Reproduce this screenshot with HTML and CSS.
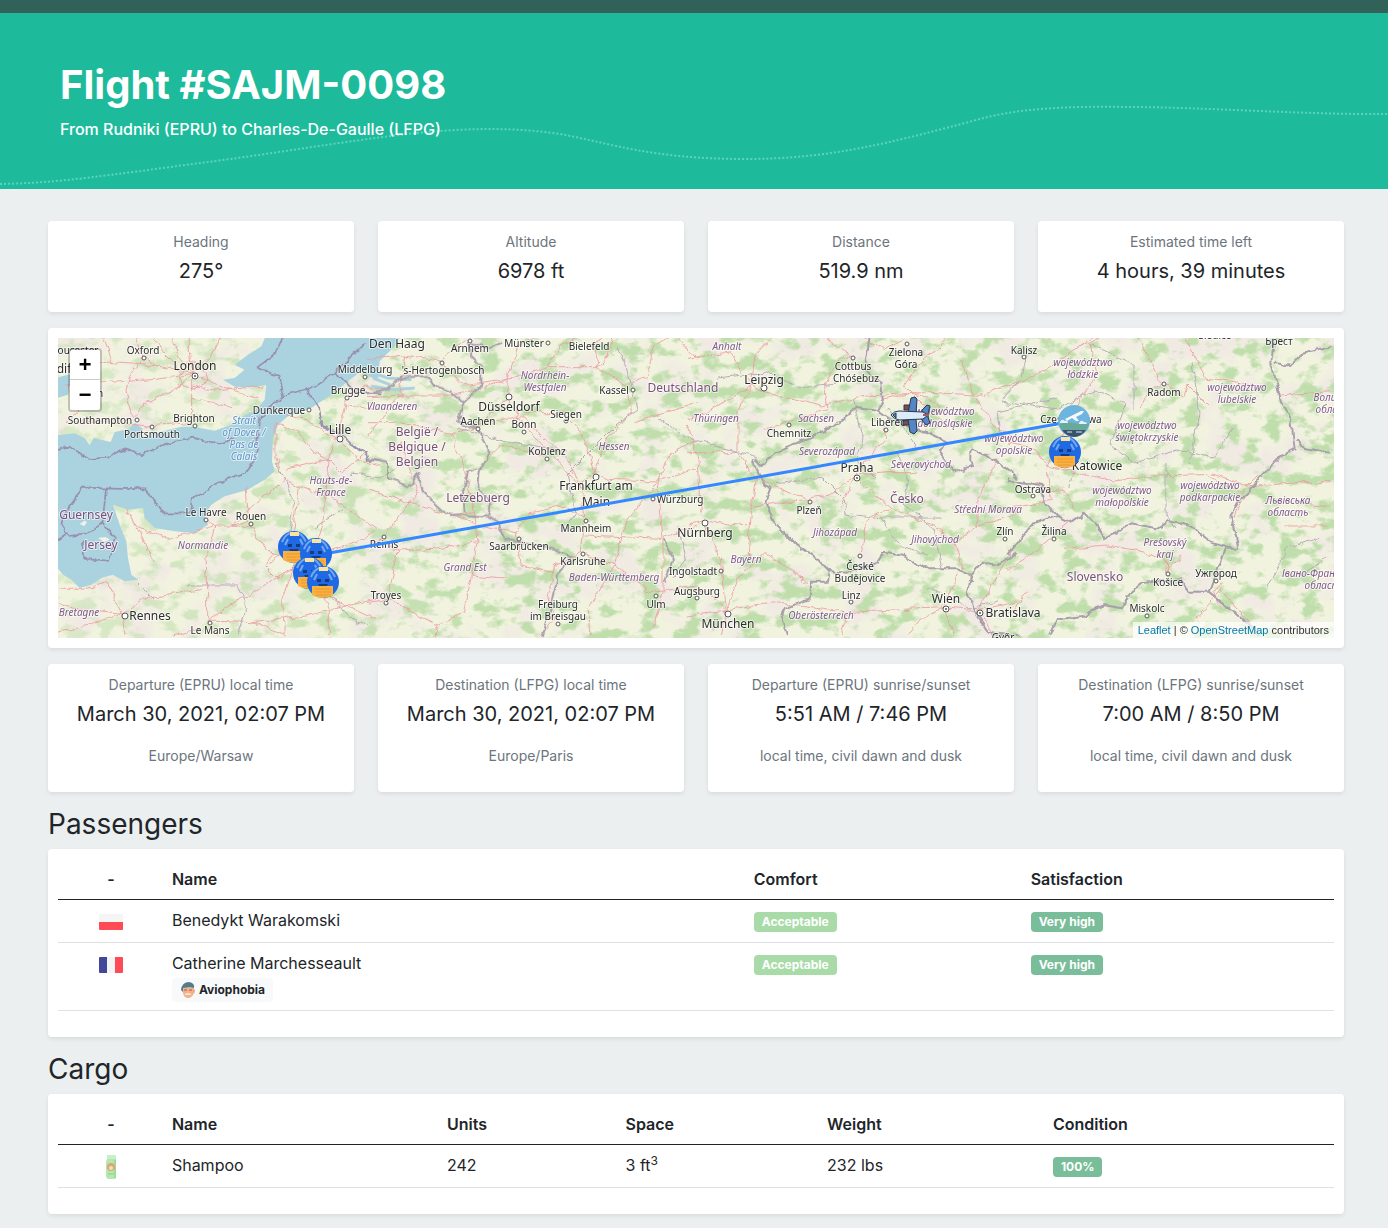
FILE: index.html
```html
<!DOCTYPE html>
<html lang="en">
<head>
<meta charset="utf-8">
<meta name="viewport" content="width=device-width, initial-scale=1">
<title>Flight #SAJM-0098</title>
<link rel="stylesheet" href="styles.css">
</head>
<body>
<div class="topbar"></div>
<header class="hero">
  <svg class="hero-wave" viewBox="0 0 1388 176" preserveAspectRatio="none" aria-hidden="true">
    <path d="M0 171C60 170 110 162 200 150C280 140 380 122 440 118C480 115 520 115 560 121C610 130 650 146 745 146C830 146 890 130 980 106C1020 95 1070 93 1130 94C1200 94 1310 102 1388 101"/>
  </svg>
  <h1 class="hero-title">Flight #SAJM-0098</h1>
  <p class="hero-subtitle">From Rudniki (EPRU) to Charles-De-Gaulle (LFPG)</p>
</header>

<main class="content">
  <section class="stats">
    <div class="card stat"><p class="stat-label">Heading</p><p class="stat-value">275°</p></div>
    <div class="card stat"><p class="stat-label">Altitude</p><p class="stat-value">6978 ft</p></div>
    <div class="card stat"><p class="stat-label">Distance</p><p class="stat-value">519.9 nm</p></div>
    <div class="card stat"><p class="stat-label">Estimated time left</p><p class="stat-value">4 hours, 39 minutes</p></div>
  </section>

  <section class="card map-card">
    <div class="map">
      <svg class="map-canvas" viewBox="58 338 1276 300" preserveAspectRatio="xMidYMid slice" role="img" aria-label="Route map">
        <defs>
          <filter id="forest" x="0" y="0" width="100%" height="100%" color-interpolation-filters="sRGB">
            <feTurbulence type="fractalNoise" baseFrequency="0.05 0.07" numOctaves="6" seed="11"/>
            <feColorMatrix values="0 0 0 0 .75  0 0 0 0 .87  0 0 0 0 .67  6 0 0 0 -3"/>
          </filter>
          <filter id="grass" x="0" y="0" width="100%" height="100%" color-interpolation-filters="sRGB">
            <feTurbulence type="fractalNoise" baseFrequency="0.025" numOctaves="5" seed="4"/>
            <feColorMatrix values="0 0 0 0 .942  0 0 0 0 .918  0 0 0 0 .89  0 5 0 0 -2.4"/>
          </filter>
          <filter id="rough" x="58" y="338" width="1276" height="300" filterUnits="userSpaceOnUse">
            <feTurbulence type="fractalNoise" baseFrequency="0.09" numOctaves="3" seed="7"/>
            <feDisplacementMap in="SourceGraphic" scale="10" xChannelSelector="R" yChannelSelector="G" color-interpolation-filters="sRGB"/>
          </filter>
          <linearGradient id="east"><stop offset="0" stop-color="#fff" stop-opacity=".45"/><stop offset=".35" stop-color="#fff"/></linearGradient>
          <mask id="forest-fade"><rect x="58" y="338" width="1276" height="300" fill="url(#east)"/></mask>
          <g id="hangar">
            <circle r="16" fill="#1f6ae4"/>
            <path d="M-12-5q4-9 10-9M12-5q-4-9-10-9M-9-2l3-6M9-2l-3-6" fill="none" stroke="#74a9f0" stroke-width="2"/>
            <rect x="-4" y="-15" width="9" height="4" fill="#fbe3a0"/>
            <path d="M-6-3h4v3h-4zM2-3h4v3h-4zM-5 2h10l-2 3h-6z" fill="#143c7c"/>
            <path d="M-11 4h21v9q-10 6-21 0z" fill="#fbb03f"/>
            <path d="M-8 7h16M-8 10h16M-7 13h13" stroke="#e39a32"/>
          </g>
        </defs>

        <rect x="58" y="338" width="1276" height="300" fill="#f1f3df"/>
        <rect x="58" y="338" width="1276" height="300" filter="url(#grass)"/>
        <g mask="url(#forest-fade)"><rect x="58" y="338" width="1276" height="300" filter="url(#forest)"/></g>

        <g class="sea" transform="translate(48 328) scale(.3333)">
          <path d="M20 322L80 316L110 330L125 352L137 330L188 342L200 312L240 304L262 285L285 303L275 330L310 318L400 296L440 297L500 308L550 290L590 262L625 245L650 215L655 172L600 178L560 176L525 155L560 150L590 125L560 110L600 80L640 55L655 20H1060L1040 55L995 100L990 160L940 130L900 160L850 200L790 240L720 265L690 290L675 330L672 400L680 430L650 455L600 485L530 505L490 530L470 560L480 590L440 615L380 610L320 600L290 570L285 540L240 545L195 530L215 590L235 640L240 690L250 740L270 755L230 760L195 740L160 750L130 770L95 780L70 755L45 740L20 710Z"/>
          <path d="M20 150L70 138L60 200L20 212Z"/>
          <path class="isle" d="M95 588l14-10 8 4-8 12zM150 630l22-3 14 8-18 6z"/>
          <path class="inlet" d="M960 130l60 20 70 5M970 175l70 10 60-5M975 150l50 20"/>
        </g>

        <g class="roads" filter="url(#rough)">
          <g transform="translate(48 328) scale(.3333)">
            <path d="M440 145L400 100 380 30M440 145L430 80 430 30M440 145L490 100 530 30M440 145L340 120 200 110 100 95M440 145L380 200 300 230 265 275M440 145L440 220 440 290M440 145L520 180 640 215M440 145L330 160 180 170 60 180M290 90L250 150 240 200 262 275M290 90L340 120M290 90L270 30M160 200L60 290M440 220L560 245M440 180L510 195 650 180M400 145L410 180 450 188 485 160 475 120 430 105 400 145M60 290L150 285 310 300 430 290M200 110L170 30M320 30L350 80 400 130"/>
            <path d="M690 290L760 320 800 380 850 400 870 335L940 400 1000 420M690 290L690 400 715 460 760 485 750 560 740 640M850 400L840 500 830 600 810 660 790 700M870 335L900 240 900 210 960 180 1000 190M870 335L790 290 720 265M900 240L1000 250M760 485L840 500 990 610M715 460L600 560 560 600 510 600 475 580M510 600L480 700 485 780 485 885 520 930M560 600L620 610 680 690 745 680M510 600L370 640 270 600 240 545M320 710L290 630 240 560M230 865L185 770 110 790 30 790M230 865L90 850 30 830M230 865L290 820 470 790M230 865L240 930M230 865L120 900 30 920M485 885L580 820 660 780 745 720M485 885L620 890 780 870 990 820M600 480L608 590 560 600M745 720L820 800 990 880M745 720L710 820 715 930M745 720L700 760 660 720 680 690M790 700L900 660 990 620M790 700L850 850 850 930M620 890L720 930M460 910L380 930M850 400L890 440 960 380M850 400L720 430M740 640L670 720"/>
          </g>
          <g transform="translate(370 328) scale(.3333)">
            <path d="M0 100L110 90 215 105 300 40M110 90L95 210 0 330M215 105L290 180 420 160 450 60 520 30M95 210L250 210 330 190 420 160M0 215L95 210M0 290L100 290 250 325 330 300 420 220M250 325L290 440 320 560 240 570M330 300L460 270 590 390 640 480M420 160L420 220 470 300 640 480M420 160L540 125 690 125 780 180 840 150 860 60 910 30M540 125L580 60 640 30M690 125L680 60 700 30M780 180L790 260 720 340 680 440M470 260L590 260 650 340 680 440M680 440L720 460 870 465 990 430M680 440L640 480 650 580 590 540 490 560 445 620 330 600M650 580L640 680 560 720 540 800 560 880 520 930M640 680L740 720 850 800 990 780M650 630L880 640 990 600M870 465L885 640 885 800 860 900M740 720L770 600 830 520 870 465M870 465L910 380 990 340M0 660L40 640 150 500 95 350M40 640L90 675 60 820 0 830M90 675L200 670 330 650M320 560L330 650 310 750 290 860 210 900 200 930M60 820L210 900M445 620L460 720 560 740M310 750L420 760M0 490L120 530 320 590M530 390L400 360 340 420M800 290L990 230M930 30L990 100M670 930L660 850 740 720M740 30L720 90 690 125"/>
          </g>
          <g transform="translate(690 328) scale(.3333)">
            <path d="M0 100L130 80 190 180 230 200 400 240 540 210 700 200 860 210 990 170M190 180L200 90 260 30M190 180L150 260 150 380 0 380M150 380L205 460 190 560 180 700M190 180L60 260 0 280M205 460L360 520 420 510 500 450M500 450L600 440 690 440M500 450L540 400 590 340 590 300M500 450L460 540M500 450L610 550 740 600 800 650M610 550L540 570 520 680M230 310L295 290 420 250 410 180 460 100 490 90M650 180L780 300M650 180L700 110 790 30M820 100L860 210 920 300 990 340M0 600L45 585 180 600M45 585L100 700 115 855M115 855L60 800 0 790M115 855L150 760 230 680 360 770M115 855L260 830 480 860 660 850 770 845M480 860L460 930M770 845L700 880 660 930M770 845L810 740M770 845L870 855 990 830M800 650L830 730 850 760M800 650L870 600 990 560M770 845L800 930M115 855L100 930M0 300L30 400 40 560M520 30L590 70 650 40M490 90L440 60 400 30M990 650L870 855M0 870L115 855M360 520L200 540M930 400L870 520 870 600M870 855L920 930M580 220L680 200 760 240"/>
          </g>
          <g transform="translate(1010 328) scale(.3333)">
            <path d="M0 190L120 130 220 60 300 30M220 60L260 30M250 60L270 140 200 250 150 370 120 420M120 420L250 450 320 465 450 450 620 445 720 480 830 470 970 470M120 420L130 520 60 540 0 550M390 30L430 110 460 170M460 170L530 210 540 180 600 240M400 240L420 200M420 200L460 170M530 30L560 90 600 160 760 180M80 470L120 490 180 500 200 550M130 635L50 700 0 730M130 635L190 580M170 670L300 660 430 685 480 710 475 740M60 800L20 850 0 870M475 740L520 690M560 880L640 790 690 850 730 900M640 770L620 800 640 850M820 210L970 200M830 600L960 600M870 530L970 540M600 450L700 500 760 440M0 350L80 370 120 420M730 480L680 570M130 40L60 20M470 700L490 740"/>
          </g>
        </g>

        <g class="regions" filter="url(#rough)">
          <path d="M278 466l12 20 6 24-5 28 11 16-8 18 18 20 26 8 12 20 20 8M190 588l50 0 10 20-10 28M140 586l16 16M620 348l12 30 8 34-20 14-50 50 8 40-14 20M460 430l60 16 50 8M660 420l30 20 70 20M720 380l50-6 30 16 40-4M855 400l10 40-6 24 20 16M776 486l50-6 20 20 2 16 36 4 60 0M884 520l20 30 26 8M890 410l30 40M900 455l10 30-4 20 30 26 8 40M1060 400l-60 14 4 30M1030 350l-6 30-20 24 56 8 36-20 32 14-16 40 24 20 44-14 36 8 20-30M1092 346l44 20 0 46M1194 366l8 50-10 50M1072 490l6-40M1168 466l0 50 10 16M1300 580l30-20M1320 540l-30 10-20 40M680 530l8 30-12 20M316 530l30-18M400 470l-18 10-30-4M930 590l40 20 30-6"/>
        </g>
        <g class="borders" filter="url(#rough)">
          <g transform="translate(48 328) scale(.3333)">
            <path d="M30 370L70 362 130 402 185 398 235 370 290 388 370 350 440 338 520 356 570 340M715 30L690 85 635 125 700 150 715 210M715 210L640 270 630 400 600 440 540 460 480 490 440 525 435 562 350 562 325 520 300 490 200 488 110 485 90 520 60 560 45 600 65 630 120 625 170 590 180 488M715 210L785 192 870 140 960 50M785 192L820 250 830 300 890 330 905 350 960 380 965 400 1000 405M870 140L930 200 1000 205M170 590L210 640 190 705 115 695 110 650M30 640L65 620"/>
          </g>
          <g class="borders-land" transform="translate(370 328) scale(.3333)">
            <path d="M0 205L60 190 100 155 180 150 200 180 250 200 290 230 270 290 330 305 345 340 365 380 335 440 330 480 370 530 360 575 390 590 410 640 540 665 610 690 570 750 550 840 525 930M290 230L340 180 340 120 310 90 300 50 370 70M0 400L60 410 60 460 130 480 150 440 165 500 240 570 290 570 360 575M330 430L300 440 285 500 290 560M370 70L400 50M890 640L915 700 890 770"/>
          </g>
          <g class="borders-land" transform="translate(690 328) scale(.3333)">
            <path d="M545 30L530 130 580 170 585 230 570 255M570 255L500 245 490 265 440 300 360 340 260 380 220 420 200 400M570 255L620 290 680 310 740 330 780 350 750 375 800 440 850 420 850 370 920 400 970 440 990 460M190 400L230 480 250 490 235 530 260 590 330 660 380 690 425 740 420 770 370 770 365 820 290 850 280 870 300 930M425 735L480 740 570 710 590 680 650 690 720 730 810 730 850 745M850 745L880 710 930 720 990 680M850 745L840 800 860 860 900 920 990 930"/>
          </g>
          <g class="borders-land" transform="translate(1010 328) scale(.3333)">
            <path d="M0 460L30 470 100 480 110 530 150 570 190 590 230 560 270 600 290 640 370 595 440 610 480 585 550 600 610 650 660 665 695 665M0 690L80 590 150 570M695 665L670 570 700 520 820 390 860 370 850 280 820 230 790 110 800 30M800 110L850 120 890 80 970 60M655 665L620 760 605 800M605 800L540 800 520 760 410 770 360 810 340 850 290 840 220 870 150 880 130 930M605 800L680 860 760 930M870 340L890 370 970 380"/>
          </g>
        </g>

        <g class="dots">
          <circle cx="144" cy="358" r="2"/><circle cx="195" cy="376" r="3"/><circle cx="137" cy="420" r="2"/><circle cx="152" cy="427" r="2"/><circle cx="195" cy="426" r="2"/><circle cx="309" cy="410" r="2"/><circle cx="340" cy="439" r="3"/><circle cx="347" cy="398" r="2"/><circle cx="365" cy="377" r="2"/><circle cx="206" cy="520" r="2"/><circle cx="251" cy="524" r="2"/><circle cx="125" cy="616" r="3"/><circle cx="210" cy="623" r="2"/><circle cx="384" cy="537" r="2"/><circle cx="386" cy="603" r="2"/><circle cx="442" cy="363" r="2"/><circle cx="470" cy="341" r="2"/><circle cx="548" cy="343" r="2"/><circle cx="509" cy="397" r="3"/><circle cx="478" cy="429" r="2"/><circle cx="524" cy="432" r="2"/><circle cx="566" cy="421" r="2"/><circle cx="547" cy="459" r="2"/><circle cx="596" cy="477" r="3"/><circle cx="633" cy="390" r="2"/><circle cx="653" cy="499" r="2"/><circle cx="586" cy="521" r="2"/><circle cx="519" cy="539" r="2"/><circle cx="583" cy="554" r="2"/><circle cx="558" cy="624" r="2"/><circle cx="656" cy="596" r="2"/><circle cx="697" cy="598" r="2"/><circle cx="721" cy="571" r="2"/><circle cx="705" cy="523" r="3"/><circle cx="728" cy="614" r="3"/><circle cx="764" cy="388" r="3"/><circle cx="789" cy="425" r="2"/><circle cx="853" cy="358" r="2"/><circle cx="907" cy="344" r="2"/><circle cx="886" cy="430" r="2"/><circle cx="857" cy="478" r="3"/><circle cx="810" cy="502" r="2"/><circle cx="860" cy="556" r="2"/><circle cx="851" cy="602" r="2"/><circle cx="946" cy="609" r="3"/><circle cx="980" cy="613" r="3"/><circle cx="1005" cy="539" r="2"/><circle cx="1024" cy="357" r="2"/><circle cx="1164" cy="384" r="2"/><circle cx="1033" cy="496" r="2"/><circle cx="1054" cy="539" r="2"/><circle cx="1168" cy="574" r="2"/><circle cx="1216" cy="581" r="2"/><circle cx="1147" cy="616" r="2"/>
          <g class="dot-core"><circle cx="195" cy="376" r="1"/><circle cx="857" cy="478" r="1"/><circle cx="946" cy="609" r="1"/><circle cx="980" cy="613" r="1"/></g>
        </g>

        <g class="place">
          <text x="78" y="354">oucester</text><text x="143" y="354">Oxford</text><text x="100" y="397">n</text><text x="100" y="424">Southampton</text><text x="152" y="438">Portsmouth</text><text x="194" y="422">Brighton</text><text x="279" y="414">Dunkerque</text><text x="348" y="394">Brugge</text><text x="365" y="373">Middelburg</text><text x="443" y="374">'s-Hertogenbosch</text><text x="470" y="352">Arnhem</text><text x="524" y="347">Münster</text><text x="589" y="350">Bielefeld</text><text x="614" y="394">Kassel</text><text x="478" y="425">Aachen</text><text x="524" y="428">Bonn</text><text x="566" y="418">Siegen</text><text x="547" y="455">Koblenz</text><text x="680" y="503">Würzburg</text><text x="586" y="532">Mannheim</text><text x="519" y="550">Saarbrücken</text><text x="583" y="565">Karlsruhe</text><text x="206" y="516">Le Havre</text><text x="251" y="520">Rouen</text><text x="384" y="548">Reims</text><text x="386" y="599">Troyes</text><text x="210" y="634">Le Mans</text><text x="558" y="608">Freiburg</text><text x="558" y="620">im Breisgau</text><text x="656" y="608">Ulm</text><text x="697" y="595">Augsburg</text><text x="693" y="575">Ingolstadt</text><text x="789" y="437">Chemnitz</text><text x="853" y="370">Cottbus</text><text x="856" y="382">Chóśebuz</text><text x="906" y="356">Zielona</text><text x="906" y="368">Góra</text><text x="888" y="426">Liberec</text><text x="809" y="514">Plzeň</text><text x="860" y="570">České</text><text x="860" y="582">Budějovice</text><text x="851" y="599">Linz</text><text x="1024" y="354">Kalisz</text><text x="1164" y="396">Radom</text><text x="1071" y="423">Częstochowa</text><text x="1033" y="493">Ostrava</text><text x="1054" y="535">Žilina</text><text x="1005" y="535">Zlín</text><text x="1168" y="586">Košice</text><text x="1216" y="577">Ужгород</text><text x="1147" y="612">Miskolc</text><text x="1003" y="641">Győr</text><text x="1215" y="339">Siedlce</text><text x="1279" y="345">Брест</text>
        </g>
        <g class="place place-large">
          <text x="195" y="370">London</text><text x="64" y="373">dif</text><text x="397" y="348">Den Haag</text><text x="340" y="434">Lille</text><text x="509" y="411">Düsseldorf</text><text x="596" y="490">Frankfurt am</text><text x="596" y="506">Main</text><text x="150" y="620">Rennes</text><text x="705" y="537">Nürnberg</text><text x="728" y="628">München</text><text x="764" y="384">Leipzig</text><text x="857" y="472">Praha</text><text x="946" y="603">Wien</text><text x="1013" y="617">Bratislava</text><text x="1097" y="470">Katowice</text>
        </g>
        <g class="place country">
          <text x="86" y="519">Guernsey</text><text x="101" y="549">Jersey</text><text x="417" y="436">België /</text><text x="417" y="451">Belgique /</text><text x="417" y="466">Belgien</text><text x="478" y="502">Letzebuerg</text><text x="683" y="392">Deutschland</text><text x="907" y="503">Česko</text><text x="1095" y="581">Slovensko</text>
        </g>
        <g class="place region">
          <text x="392" y="410">Vlaanderen</text><text x="545" y="379">Nordrhein-</text><text x="545" y="391">Westfalen</text><text x="614" y="450">Hessen</text><text x="331" y="484">Hauts-de-</text><text x="331" y="496">France</text><text x="203" y="549">Normandie</text><text x="79" y="616">Bretagne</text><text x="465" y="571">Grand Est</text><text x="614" y="581">Baden-Württemberg</text><text x="746" y="563">Bayern</text><text x="727" y="350">Anhalt</text><text x="716" y="422">Thüringen</text><text x="816" y="422">Sachsen</text><text x="827" y="455">Severozápad</text><text x="921" y="468">Severovýchod</text><text x="835" y="536">Jihozápad</text><text x="935" y="543">Jihovýchod</text><text x="988" y="513">Střední Morava</text><text x="821" y="619">Oberösterreich</text><text x="945" y="415">województwo</text><text x="945" y="427">dolnośląskie</text><text x="1014" y="442">województwo</text><text x="1014" y="454">opolskie</text><text x="1083" y="366">województwo</text><text x="1083" y="378">łódzkie</text><text x="1237" y="391">województwo</text><text x="1237" y="403">lubelskie</text><text x="1147" y="429">województwo</text><text x="1147" y="441">świętokrzyskie</text><text x="1122" y="494">województwo</text><text x="1122" y="506">małopolskie</text><text x="1210" y="489">województwo</text><text x="1210" y="501">podkarpackie</text><text x="1165" y="546">Prešovský</text><text x="1165" y="558">kraj</text><text x="1288" y="504">Львівська</text><text x="1288" y="516">область</text><text x="1338" y="401">Волинська</text><text x="1336" y="413">область</text><text x="1325" y="577">Івано-Франківська</text><text x="1325" y="589">область</text>
        </g>
        <g class="place region water">
          <text x="244" y="424">Strait</text><text x="244" y="436">of Dover /</text><text x="244" y="448">Pas de</text><text x="244" y="460">Calais</text>
        </g>

        <path d="M318 555L1074 421" fill="none" stroke="#3388ff" stroke-width="3"/>
        <use href="#hangar" x="294" y="547"/>
        <use href="#hangar" x="316" y="554"/>
        <use href="#hangar" x="309" y="573"/>
        <use href="#hangar" x="323" y="582"/>
        <use href="#hangar" x="1065" y="452"/>
        <g transform="translate(1074 421)">
          <circle r="16" fill="#6db5df"/>
          <path d="M-15 3q8-3 15-1t15 0q-1 5-4 8h-22q-3-3-4-7z" fill="#69a99c"/>
          <path d="M-12 9h24q-5 7-12 7t-12-7z" fill="#3a536d"/>
          <path d="M-7 11h5M2 11h6" stroke="#dce9ef" stroke-width="1"/>
          <path d="M-9-2L7-10l3 0-2 3-6 3 3 4-3 0-4-3-5 3z" fill="#f5fafc"/>
          <path d="M-14 1q2-4 5-1 3-1 3 2h-8zM5 2q2-4 5-1 3 0 3 2h-8z" fill="#e1f3f7"/>
        </g>
        <g transform="translate(911 415)" stroke="#26384f" stroke-width="1" stroke-linejoin="round">
          <path d="M-7-10l6 0 0 5-6 0zM-8 6l7-1 0 5-7 0z" fill="#804b49"/>
          <path d="M0-17l4-1 2 2-1 14h-8zM-3 4l8 0 1 12-3 3-4-2z" fill="#5585c4"/>
          <path d="M11-5l5-5 3 1-2 8 0 3 2 6-4 2-5-6z" fill="#5585c4"/>
          <path d="M-20 0q3-4 8-4l24 1 5 3-5 4-24 1q-5-1-8-5z" fill="#dceafa"/>
          <path d="M-18 0l3-2v5z" fill="#5d87b8"/>
          <path d="M12 0h6" stroke="#a75d51" stroke-width="2"/>
        </g>
      </svg>
      <div class="zoom-control">
        <button type="button" class="zoom-button" aria-label="Zoom in">+</button>
        <button type="button" class="zoom-button" aria-label="Zoom out">−</button>
      </div>
      <div class="attribution"><a href="#leaflet">Leaflet</a> | © <a href="#osm">OpenStreetMap</a> contributors</div>
    </div>
  </section>

  <section class="stats">
    <div class="card stat"><p class="stat-label">Departure (EPRU) local time</p><p class="stat-value">March 30, 2021, 02:07 PM</p><p class="stat-label stat-note">Europe/Warsaw</p></div>
    <div class="card stat"><p class="stat-label">Destination (LFPG) local time</p><p class="stat-value">March 30, 2021, 02:07 PM</p><p class="stat-label stat-note">Europe/Paris</p></div>
    <div class="card stat"><p class="stat-label">Departure (EPRU) sunrise/sunset</p><p class="stat-value">5:51 AM / 7:46 PM</p><p class="stat-label stat-note">local time, civil dawn and dusk</p></div>
    <div class="card stat"><p class="stat-label">Destination (LFPG) sunrise/sunset</p><p class="stat-value">7:00 AM / 8:50 PM</p><p class="stat-label stat-note">local time, civil dawn and dusk</p></div>
  </section>

  <section>
    <h2 class="section-title">Passengers</h2>
    <div class="card table-card">
      <table class="table passengers">
        <colgroup><col class="col-icon"><col class="col-name"><col class="col-comfort"><col></colgroup>
        <thead><tr><th class="icon-cell">-</th><th>Name</th><th>Comfort</th><th>Satisfaction</th></tr></thead>
        <tbody>
          <tr>
            <td class="icon-cell"><svg class="icon" viewBox="0 0 24 24" role="img" aria-label="Poland"><rect y="4" width="24" height="16" rx="1" fill="#f5f5f5"/><path d="M0 12h24v7a1 1 0 0 1-1 1H1a1 1 0 0 1-1-1z" fill="#ff4b55"/></svg></td>
            <td>Benedykt Warakomski</td>
            <td><span class="badge badge-ok">Acceptable</span></td>
            <td><span class="badge badge-good">Very high</span></td>
          </tr>
          <tr>
            <td class="icon-cell"><svg class="icon" viewBox="0 0 24 24" role="img" aria-label="France"><rect y="4" width="24" height="16" rx="1" fill="#f5f5f5"/><path d="M8 4v16H1a1 1 0 0 1-1-1V5a1 1 0 0 1 1-1z" fill="#41479b"/><path d="M16 4v16h7a1 1 0 0 0 1-1V5a1 1 0 0 0-1-1z" fill="#ff4b55"/></svg></td>
            <td>Catherine Marchesseault
              <div class="traits"><span class="badge badge-light"><svg class="trait-icon" viewBox="0 0 16 16" aria-hidden="true"><path d="M2 5h12v6q-2 5-6 5t-5-5z" fill="#f3b28c"/><path d="M1 8q1-8 8-8 6 1 5 6l-4-1-7 1v4z" fill="#547b8c"/><path d="M4 8h3M9 8h3" stroke="#a65e4a"/><path d="M5 12q3-2 6 0v1H5z" fill="#f9e4d5"/><path d="M13 7l2 1-1 4z" fill="#e69b73"/></svg>Aviophobia</span></div>
            </td>
            <td><span class="badge badge-ok">Acceptable</span></td>
            <td><span class="badge badge-good">Very high</span></td>
          </tr>
        </tbody>
      </table>
    </div>
  </section>

  <section>
    <h2 class="section-title">Cargo</h2>
    <div class="card table-card">
      <table class="table cargo">
        <colgroup><col class="col-icon"><col class="col-item"><col class="col-units"><col class="col-space"><col class="col-weight"><col></colgroup>
        <thead><tr><th class="icon-cell">-</th><th>Name</th><th>Units</th><th>Space</th><th>Weight</th><th>Condition</th></tr></thead>
        <tbody>
          <tr>
            <td class="icon-cell"><svg class="icon" viewBox="0 0 24 24" aria-hidden="true"><path d="M8 0h9v23l-1 1H9l-2-2V7l1-3z" fill="#b5e8ae"/><path d="M8 0h9v4H8z" fill="#c5f0c8"/><path d="M15 5h2v18h-2z" fill="#9cdc98"/><circle cx="12" cy="12" r="4" fill="#d9a877"/><circle cx="12" cy="13" r="2" fill="#f7ddc2"/><path d="M9 19h6" stroke="#8bcf86"/></svg></td>
            <td>Shampoo</td>
            <td>242</td>
            <td>3 ft<sup>3</sup></td>
            <td>232 lbs</td>
            <td><span class="badge badge-good">100%</span></td>
          </tr>
        </tbody>
      </table>
    </div>
  </section>
</main>
</body>
</html>
```
FILE: styles.css
```css
*, *::before, *::after { box-sizing: border-box; }

body {
  margin: 0;
  background: #ebefef;
  color: #212529;
  font: 400 16px/24px Inter, sans-serif;
}

h1, h2, p { margin: 0; }

.topbar { height: 13px; background: linear-gradient(#325f5b, #306156 60%, #36615c); }

.hero { position: relative; padding: 48px 60px; background: #1dbb9c; color: #fff; }
.hero-wave { position: absolute; inset: 0; width: 100%; height: 100%; }
.hero-wave path { fill: none; stroke: #6ddbc4; stroke-width: 2; stroke-dasharray: 2 2; opacity: .8; }
.hero-title { position: relative; font-size: 40px; line-height: 48px; font-weight: 700; }
.hero-subtitle { position: relative; padding-top: 8px; font-weight: 500; }

.content { padding: 32px 44px 14px 48px; }

.card { background: #fff; border-radius: 4px; box-shadow: 0 2px 4px rgba(0, 0, 0, .08); }

.stats { display: grid; grid-template-columns: repeat(4, 1fr); gap: 24px; }
.stat { padding: 10px 10px 29px; text-align: center; }
.stat-label { color: #6c757d; font-size: 14px; line-height: 22px; font-weight: 400; }
.stat-value { padding-top: 6px; font-size: 20px; line-height: 24px; font-weight: 400; }
.stat-note { padding: 19px 0 0; margin-bottom: -4px; }

.map-card { margin: 16px 0; padding: 10px; }
.map { position: relative; height: 300px; overflow: hidden; }
.map-canvas { display: block; width: 100%; height: 100%; }
.sea path { fill: #aad3df; }
.sea .isle { fill: #f3f3e5; }
.sea .inlet { fill: none; stroke: #aad3df; stroke-width: 9; }
.roads path { fill: none; stroke: #ee9aa2; stroke-width: 3; stroke-linejoin: round; opacity: .85; }
.regions path { fill: none; stroke: #b7adb7; stroke-width: 1; }
.borders path { fill: none; stroke: #998fae; stroke-width: 5; stroke-linejoin: round; }
.borders .borders-land path { stroke: #a99fac; stroke-width: 6; }
.dots circle { fill: #fff; stroke: #555; stroke-width: 1; }
.dots .dot-core circle { fill: #555; stroke: none; }
.place { font: 400 10px/12px "Noto Sans", sans-serif; text-anchor: middle; fill: #2c2c2c; stroke: rgba(255, 255, 255, .6); stroke-width: 2; paint-order: stroke; stroke-linejoin: round; }
.place-large { font-size: 12px; }
.country { font-size: 12px; fill: #7a507b; }
.region { font-style: italic; fill: #80598a; }
.water { fill: #5f93c9; }

.zoom-control { position: absolute; top: 10px; left: 10px; border: 2px solid rgba(0, 0, 0, .2); border-radius: 4px; background-clip: padding-box; }
.zoom-button { display: block; width: 30px; height: 30px; padding: 4px 0 0; border: 0; background: #fff; color: #000; font: 700 22px/26px "Liberation Mono", monospace; }
.zoom-button:first-child { border-bottom: 1px solid #ccc; border-radius: 2px 2px 0 0; }
.zoom-button:last-child { border-radius: 0 0 2px 2px; }
.attribution { position: absolute; right: 0; bottom: 0; padding: 0 5px; background: rgba(255, 255, 255, .7); color: #333; font: 400 11px/16px "Liberation Sans", Arial, sans-serif; }
.attribution a { color: #0078a8; text-decoration: none; }

.section-title { padding: 15px 0 8px; font-size: 28px; line-height: 34px; font-weight: 400; }

.table-card { padding: 10px 10px 26px; }
.table { width: 100%; border-collapse: collapse; table-layout: fixed; }
.table th, .table td { padding: 8px; text-align: left; vertical-align: top; }
.table th { font-weight: 600; border-bottom: 1px solid #212529; }
.table td { height: 43px; border-bottom: 1px solid #dee2e6; }
.table .icon-cell { text-align: center; }
.col-icon { width: 8.3%; }
.col-name { width: 45.6%; }
.col-comfort { width: 21.7%; }
.col-item { width: 21.55%; }
.col-units { width: 14%; }
.col-space { width: 15.8%; }
.col-weight { width: 17.7%; }
.icon { display: block; width: 24px; height: 24px; margin: 2px auto 0; }
.table sup { font-size: 12px; line-height: 0; }

.badge { display: inline-block; padding: 4px 8px; border-radius: 4px; color: #fff; font-size: 12px; line-height: 12px; font-weight: 700; vertical-align: middle; }
.badge-ok { background: #a8dba8; }
.badge-good { background: #79bd9a; }
.badge-light { display: inline-flex; align-items: center; gap: 3px; background: #f8f9fa; color: #212529; }
.traits { height: 27px; padding-top: 1px; }
.trait-icon { width: 16px; height: 16px; }
```
